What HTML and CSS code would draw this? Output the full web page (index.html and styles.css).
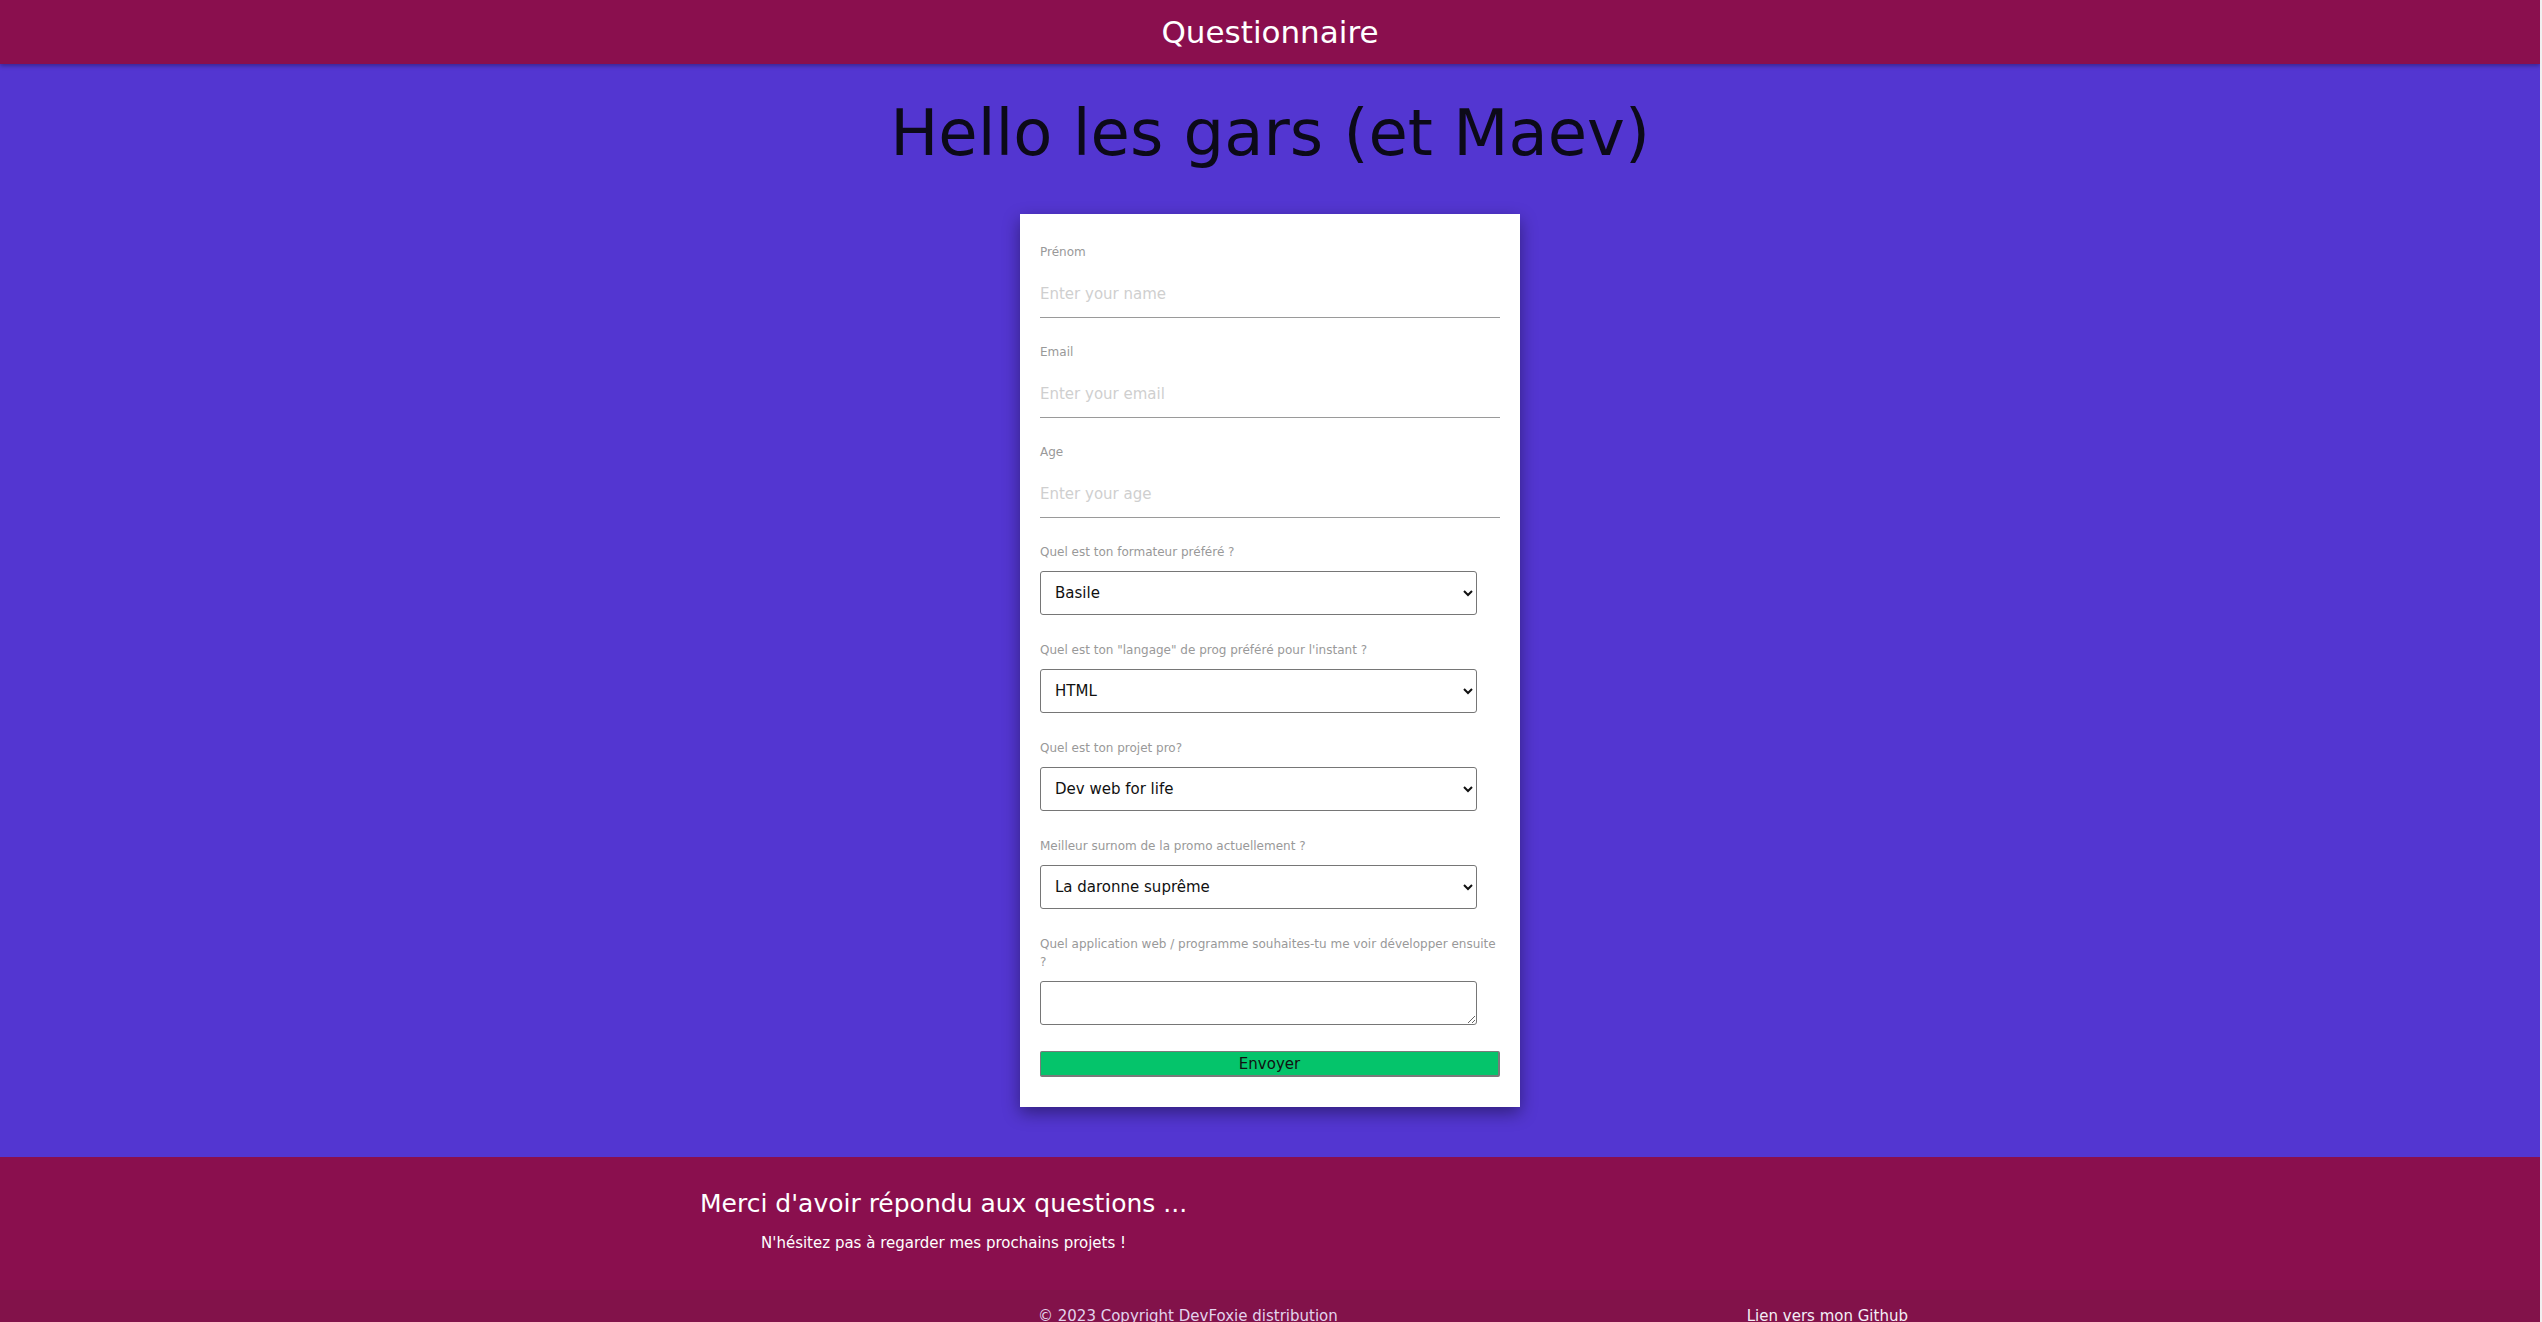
FILE: index.html
```html
<!DOCTYPE html>
<html lang="fr">
<head>
<meta charset="utf-8">
<title>Questionnaire</title>
<link rel="stylesheet" href="styles.css">
</head>
<body>
<header class="topbar">
  <span class="topbar-title">Questionnaire</span>
</header>
<main class="main">
  <h1 class="title">Hello les gars (et Maev)</h1>
  <form class="card">
    <div class="field field--text">
      <label class="field-label">Prénom</label>
      <input class="text-input" type="text" placeholder="Enter your name">
    </div>
    <div class="field field--text">
      <label class="field-label">Email</label>
      <input class="text-input" type="email" placeholder="Enter your email">
    </div>
    <div class="field field--text">
      <label class="field-label">Age</label>
      <input class="text-input" type="text" placeholder="Enter your age">
    </div>
    <div class="field field--box">
      <label class="field-label">Quel est ton formateur préféré ?</label>
      <select class="select"><option>Basile</option></select>
    </div>
    <div class="field field--box">
      <label class="field-label">Quel est ton "langage" de prog préféré pour l'instant ?</label>
      <select class="select"><option>HTML</option></select>
    </div>
    <div class="field field--box">
      <label class="field-label">Quel est ton projet pro?</label>
      <select class="select"><option>Dev web for life</option></select>
    </div>
    <div class="field field--box">
      <label class="field-label">Meilleur surnom de la promo actuellement ?</label>
      <select class="select"><option>La daronne suprême</option></select>
    </div>
    <div class="field field--box">
      <label class="field-label">Quel application web / programme souhaites-tu me voir développer ensuite ?</label>
      <textarea class="textarea"></textarea>
    </div>
    <button class="submit" type="button">Envoyer</button>
  </form>
</main>
<footer class="footer">
  <div class="footer-main">
    <div class="thanks">
      <h2 class="thanks-title">Merci d'avoir répondu aux questions ...</h2>
      <p class="thanks-text">N'hésitez pas à regarder mes prochains projets !</p>
    </div>
  </div>
  <div class="footer-bottom">
    <span class="copyright">© 2023 Copyright DevFoxie distribution</span>
    <a class="github" href="#">Lien vers mon Github</a>
  </div>
</footer>
</body>
</html>
```
FILE: styles.css
```css
html {
  margin: 0;
  padding: 0;
  background: #f0f0f0;
}
body {
  margin: 0 2px 0 0;
  padding: 0;
  font-family: "DejaVu Sans", Verdana, sans-serif;
  background: #5336d1;
}
.topbar {
  position: relative;
  z-index: 2;
  height: 64px;
  background: #8a0f4e;
  display: flex;
  align-items: center;
  justify-content: center;
  box-shadow: 0 2px 4px rgba(0, 0, 0, 0.3);
}
.topbar-title {
  color: #ffffff;
  font-size: 31px;
  line-height: normal;
}
.main {
  background: #5336d1;
  padding: 32px 0 50px;
}
.title {
  margin: 0 0 44px;
  text-align: center;
  font-size: 64px;
  font-weight: normal;
  line-height: normal;
  color: #0c0a18;
}
.card {
  box-sizing: border-box;
  width: 500px;
  margin: 0 auto;
  padding: 29px 20px 30px;
  background: #ffffff;
  box-shadow: 0 6px 16px rgba(0, 0, 0, 0.4);
}
.field {
  display: flex;
  flex-direction: column;
  align-items: flex-start;
}
.field--text {
  margin-bottom: 25px;
}
.field--box {
  margin-bottom: 26px;
}
.field-label {
  font-size: 12px;
  line-height: 18px;
  color: #999999;
  margin-bottom: 10px;
}
.text-input {
  box-sizing: border-box;
  display: block;
  width: 100%;
  height: 47px;
  padding: 0;
  border: 0;
  border-bottom: 1px solid #9a9a9a;
  font-family: inherit;
  font-size: 15px;
  color: #222;
  outline: none;
  background: transparent;
}
.text-input::placeholder {
  color: #cfcfcf;
}
.select {
  box-sizing: border-box;
  display: block;
  width: 95%;
  height: 44px;
  padding: 0 8px 0 10px;
  border: 1px solid #767676;
  border-radius: 3px;
  background: #ffffff;
  font-family: inherit;
  font-size: 15px;
  color: #111;
}
.textarea {
  box-sizing: border-box;
  display: block;
  width: 95%;
  height: 44px;
  margin: 0;
  border: 1px solid #767676;
  border-radius: 3px;
  font-family: inherit;
  font-size: 15px;
}
.submit {
  box-sizing: border-box;
  display: block;
  width: 100%;
  height: 26px;
  padding: 0;
  border: 1px solid #7a7a7a;
  border-right-width: 2px;
  border-bottom-width: 2px;
  border-radius: 2px;
  background: #05c46b;
  font-family: inherit;
  font-size: 15px;
  color: #111;
}
.footer {
  background: #8a0f4e;
}
.footer-main {
  padding: 32px 0 38px 700px;
}
.thanks {
  width: fit-content;
  text-align: center;
}
.thanks-title {
  margin: 0;
  font-size: 25px;
  font-weight: normal;
  line-height: normal;
  color: #ffffff;
}
.thanks-text {
  margin: 16px 0 0;
  font-size: 15px;
  line-height: normal;
  color: #ffffff;
}
.footer-bottom {
  display: flex;
  gap: 409px;
  padding: 17px 0 20px 1038px;
  background: #82124a;
  font-size: 15px;
  line-height: normal;
}
.copyright {
  color: #e3d3ec;
}
.github {
  color: #f4eef6;
  text-decoration: none;
}
```
